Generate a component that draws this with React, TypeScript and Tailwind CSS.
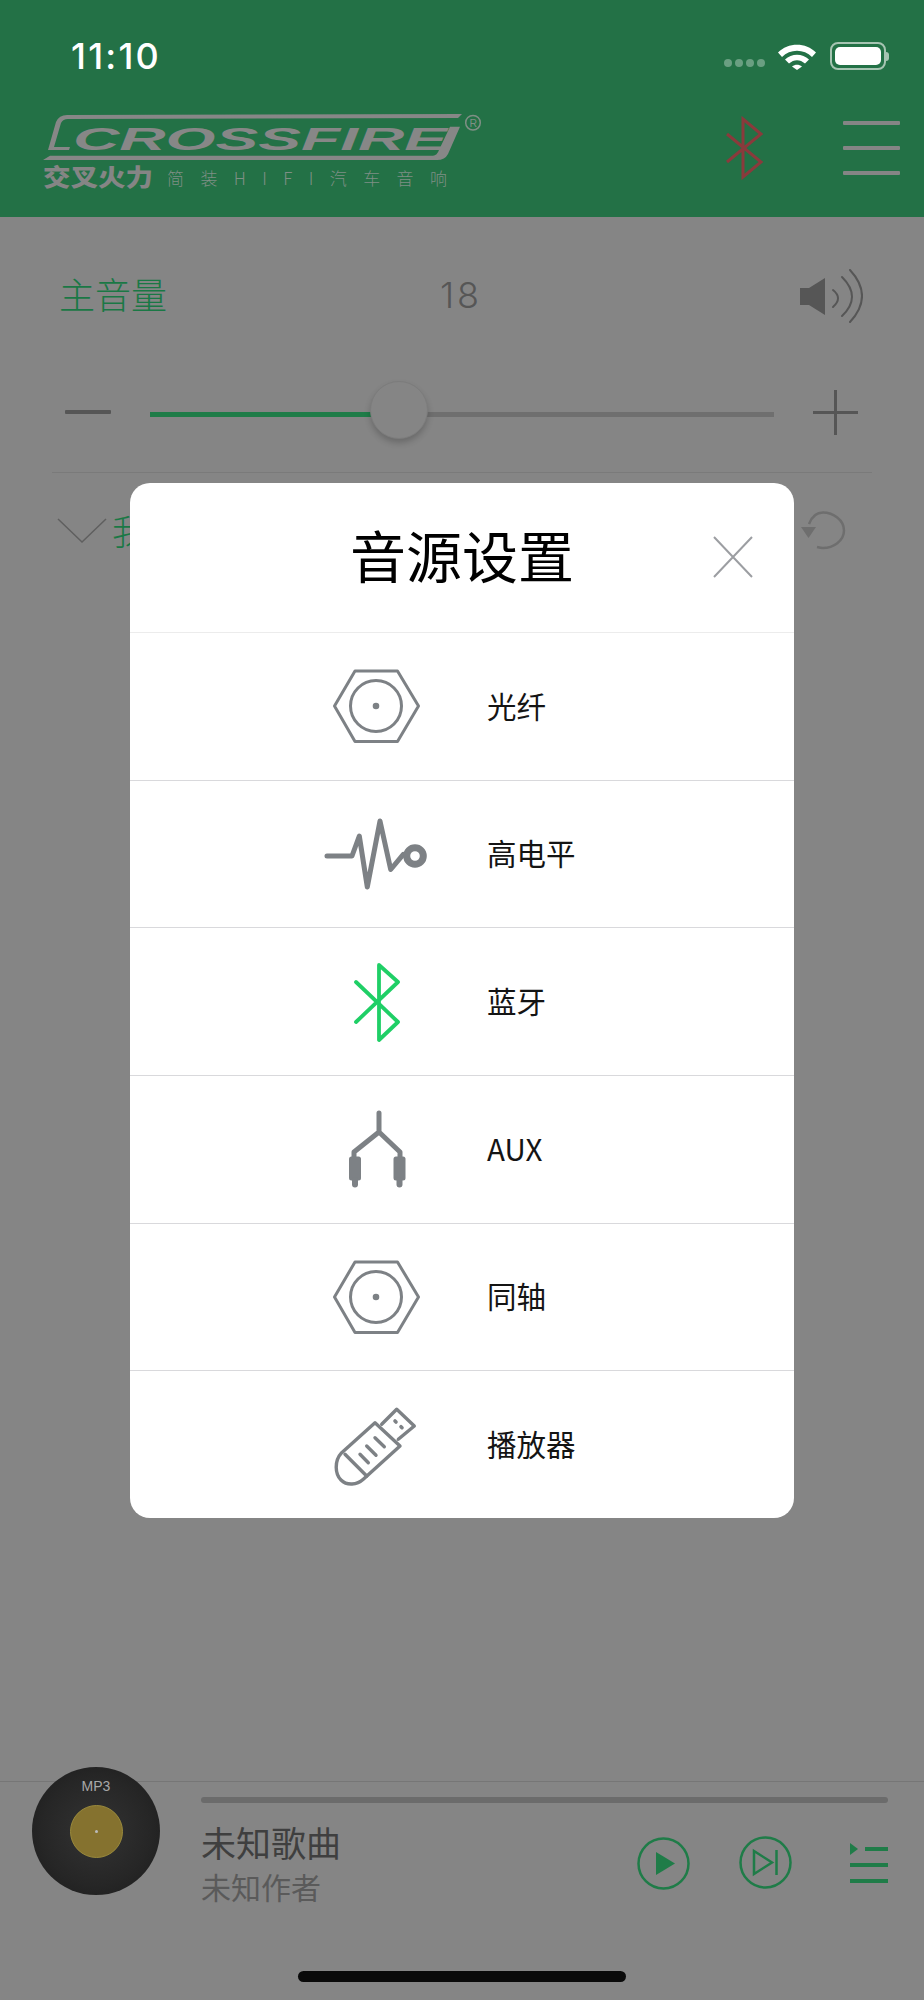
const SOURCES = [
  { label: "光纤", icon: "hex" },
  { label: "高电平", icon: "wave" },
  { label: "蓝牙", icon: "bluetooth" },
  { label: "AUX", icon: "aux" },
  { label: "同轴", icon: "hex" },
  { label: "播放器", icon: "usb" },
];

function SourceIcon({ name }: { name: string }) {
  const gray = "#7d8185";
  return (
    <svg width="110" height="100" viewBox="0 0 110 100" fill="none" strokeLinecap="round" strokeLinejoin="round" className="shrink-0">
      {name === "hex" && (
        <g stroke={gray} strokeWidth="3">
          <path d="M13.500 50 34 15H76.500L97.500 50 76.500 85.500H34Z" />
          <circle cx="55" cy="50" r="25.500" />
          <circle cx="55" cy="50" r="1.800" fill={gray} />
        </g>
      )}
      {name === "wave" && (
        <g stroke={gray}>
          <path d="M6 52H31L38.300 32 46.300 83 59 17 69.700 65.500 82.300 50.300" strokeWidth="5" />
          <circle cx="94" cy="52" r="8.300" strokeWidth="7" />
        </g>
      )}
      {name === "bluetooth" && (
        <path d="M35 30 77 70 58 88V13L77 30 35 70" stroke="#1fcf66" strokeWidth="3.800" />
      )}
      {name === "aux" && (
        <g>
          <path d="M58 14V33L33 53V59M58 33 79 53V59" stroke={gray} strokeWidth="5" />
          <rect x="28" y="57.500" width="12" height="24" rx="2.500" fill={gray} />
          <rect x="72.500" y="57.500" width="12" height="24" rx="2.500" fill={gray} />
          <path d="M34 81V85.500M78.500 81V85.500" stroke={gray} strokeWidth="6" />
        </g>
      )}
      {name === "usb" && (
        <g stroke={gray} strokeWidth="3.400">
          <path d="M54 27.700 79 51 42.300 84.300C36 90 26 91 20 85 14 79 13 66 20.700 57.700Z" />
          <path d="M24 59.300 45.700 81" />
          <path d="M60.700 29.300 75.700 14.300 93.300 31 77.300 44.300" />
          <path d="M74 26 75 27M80 31.700 81 32.700" strokeWidth="3.600" />
          <path d="M39 59.300 47.300 67.700M45.700 51 55 60.300M54 42.700 63.300 51.700" />
        </g>
      )}
    </svg>
  );
}

function Logo() {
  return (
    <svg width="440" height="78" viewBox="0 0 440 78" overflow="visible" className="block shrink-0">
      <path d="M419 2 24 3Q16 3 13 10L5 38H26L27 35H11L18 11Q20 7 25 7L415 6Z" fill="#878787" />
      <path d="M0 48 7 43.700H390Q394 43.700 396 38L407 14.700H417L405 42Q402 48 394 48Z" fill="#878787" />
      <text x="30" y="38" fontFamily="Liberation Sans, sans-serif" fontWeight="700" fontStyle="italic" fontSize="32" textLength="374" lengthAdjust="spacingAndGlyphs" fill="#878787">
        CROSSFIRE
      </text>
      <circle cx="430" cy="10.700" r="7.300" stroke="#7f8f85" strokeWidth="1.500" fill="none" />
      <text x="426.500" y="14.500" fontFamily="Liberation Sans, sans-serif" fontSize="10.500" fill="#7f8f85">
        R
      </text>
      <text x="0" y="74" fontFamily="Noto Sans CJK SC, sans-serif" fontWeight="900" fontSize="24" textLength="110" lengthAdjust="spacingAndGlyphs" fill="#858585">
        交叉火力
      </text>
      <text x="124" y="73" fontFamily="Noto Sans CJK SC, sans-serif" fontWeight="300" fontSize="17" textLength="280" lengthAdjust="spacing" fill="#7f8f85">
        简装HIFI汽车音响
      </text>
    </svg>
  );
}

function StatusBar() {
  return (
    <div className="h-[112px] flex items-center justify-between pl-[71px] pr-[35px] text-white">
      <span className="font-[Inter,sans-serif] text-[36px] font-medium tracking-[2.200px] leading-none">11:10</span>
      <div className="flex items-center">
        <div className="flex gap-[3px] mt-[13px] mr-[12px]">
          <span className="w-[8px] h-[8px] rounded-full bg-[#6a9f82]" />
          <span className="w-[8px] h-[8px] rounded-full bg-[#6a9f82]" />
          <span className="w-[8px] h-[8px] rounded-full bg-[#6a9f82]" />
          <span className="w-[8px] h-[8px] rounded-full bg-[#6a9f82]" />
        </div>
        <svg width="40" height="28" viewBox="0 0 40 28" className="mr-[13px]">
          <path d="M1 10.500C11 0 29 0 39 10.500L35 15C27 6.500 13 6.500 5 15Z" fill="#fff" />
          <path d="M8 17.500C14.500 11 25.500 11 32 17.500L28 21.500C23 17 17 17 12 21.500Z" fill="#fff" />
          <path d="M15 24.500C18 22 22 22 25 24.500L20 28Z" fill="#fff" />
        </svg>
        <div className="flex items-center">
          <div className="w-[56px] h-[28px] rounded-[8px] border-2 border-[#a6c4b2] p-[3px]">
            <div className="w-full h-full rounded-[5px] bg-white" />
          </div>
          <div className="w-[3px] h-[9px] rounded-r-full bg-[#a6c4b2]" />
        </div>
      </div>
    </div>
  );
}

function Header() {
  return (
    <header className="h-[217px] bg-[#237146]">
      <StatusBar />
      <div className="flex pl-[43px]">
        <Logo />
        <svg width="40" height="64" viewBox="0 0 40 64" fill="none" className="ml-[241px] mt-[4px] shrink-0">
          <path d="M3 18 37 46 19 61V3L37 18 3 46" stroke="#8a3a3c" strokeWidth="3" />
        </svg>
        <div className="ml-[79px] mt-[9px] w-[57px] h-[54px] shrink-0 flex flex-col justify-between">
          <span className="h-[4px] bg-[#858585] rounded-[1px]" />
          <span className="h-[4px] bg-[#858585] rounded-[1px]" />
          <span className="h-[4px] bg-[#858585] rounded-[1px]" />
        </div>
      </div>
    </header>
  );
}

function VolumePanel() {
  return (
    <div className="pt-[52px]">
      <div className="grid grid-cols-[1fr_auto_1fr] items-center h-[54px] pl-[59px] pr-[61px]">
        <span className="text-[36px] leading-none font-light text-[#1a7845] pb-[6px]">主音量</span>
        <span className="font-[Inter,sans-serif] text-[36px] leading-none font-light tracking-[3px] text-[#565656] pb-[2px]">18</span>
        <svg width="64" height="54" viewBox="0 0 64 54" fill="none" className="justify-self-end">
          <path d="M1 19H10L26 9V46L10 36H1Z" fill="#565656" />
          <path d="M34 21Q44 29 34 38" stroke="#565656" strokeWidth="2" strokeLinecap="round" />
          <path d="M43 8Q63 28 43 47" stroke="#565656" strokeWidth="2" strokeLinecap="round" />
          <path d="M51 1Q75 27 51 53" stroke="#565656" strokeWidth="2" strokeLinecap="round" />
        </svg>
      </div>

      <div className="flex items-center h-[58px] mt-[60px] pl-[65px] pr-[66px]">
        <span className="w-[46px] h-[4px] bg-[#565656] rounded-[1px]" />
        <div className="relative flex-1 h-[5px] mx-[39px] mt-[5px] bg-[#6f6f6f]">
          <div className="h-full w-[221px] bg-[#1f7c48]" />
          <div className="absolute left-[220px] top-[-31px] w-[58px] h-[58px] rounded-full bg-[#858585] border border-[#7c7c7c] shadow-[0_4px_6px_rgba(0,0,0,0.2)]" />
        </div>
        <svg width="45" height="45" viewBox="0 0 45 45" fill="none">
          <path d="M0 22.500H45M22.500 0V45" stroke="#565656" strokeWidth="3" />
        </svg>
      </div>

      <div className="h-px mt-[31px] mx-[52px] bg-[#7a7a7a]" />

      <div className="flex items-center justify-between h-[60px] mt-[28px] pl-[57px] pr-[78px]">
        <div className="flex items-center">
          <svg width="50" height="26" viewBox="0 0 50 26" fill="none">
            <path d="M1 1 25 24 49 1" stroke="#5f5f5f" strokeWidth="1.500" />
          </svg>
          <span className="ml-[5px] text-[35px] leading-none font-light text-[#1a7845] pb-[4px]">我</span>
        </div>
        <svg width="46" height="40" viewBox="0 0 46 40" fill="none">
          <path d="M9 13C12 5 17 1.500 23 1.500 33 1.500 44 9 44 19.500S33 37 23 37C21 37 19 36.500 17 36" stroke="#6e6e6e" strokeWidth="2.500" />
          <path d="M1 16H16L8.500 27Z" fill="#6e6e6e" />
        </svg>
      </div>
    </div>
  );
}

function Player() {
  return (
    <div className="border-t border-[#767676] h-[219px] pl-[32px] pr-[36px] flex">
      <div className="relative w-[128px] h-[128px] -mt-[15px] shrink-0 rounded-full bg-[radial-gradient(circle,#333_0%,#262626_60%,#1a1a1a_100%)] flex items-center justify-center">
        <span className="absolute top-[12px] font-[Liberation_Sans,sans-serif] text-[14px] leading-none text-[#a8a8a8]">MP3</span>
        <div className="w-[53px] h-[53px] rounded-full bg-[#85722f] border border-[#9a8a3c] flex items-center justify-center">
          <span className="w-[3px] h-[3px] rounded-full bg-[#bbb]" />
        </div>
      </div>
      <div className="flex-1 ml-[41px] pt-[15px]">
        <div className="h-[6px] rounded-full bg-[#6b6b6b]" />
        <div className="flex mt-[16px]">
          <div className="flex-1">
            <div className="text-[35px] leading-[46px] text-[#3f3f3f]">未知歌曲</div>
            <div className="text-[30px] leading-[42px] text-[#5a5a5a]">未知作者</div>
          </div>
          <svg width="53" height="53" viewBox="0 0 53 53" fill="none" className="mt-[18px] -ml-[1px]">
            <circle cx="26.500" cy="26.500" r="25" stroke="#1f7c48" strokeWidth="2.500" />
            <path d="M19 15 38 26.500 19 38Z" fill="#1f7c48" />
          </svg>
          <svg width="53" height="53" viewBox="0 0 53 53" fill="none" className="mt-[17px] ml-[49px]">
            <circle cx="26.500" cy="26.500" r="25" stroke="#1f7c48" strokeWidth="2.500" />
            <path d="M15 15 33 26.500 15 38Z" stroke="#1f7c48" strokeWidth="2.500" />
            <path d="M37.500 14V39" stroke="#1f7c48" strokeWidth="2.500" />
          </svg>
          <div className="relative w-[38px] h-[40px] ml-[58px] mt-[24px] flex flex-col justify-between items-end">
            <svg width="8" height="12" viewBox="0 0 8 12" className="absolute left-0 top-0">
              <path d="M0 0 8 6 0 12Z" fill="#1f7c48" />
            </svg>
            <span className="w-[23px] h-[4px] mt-[4px] bg-[#1f7c48]" />
            <span className="w-full h-[4px] bg-[#1f7c48]" />
            <span className="w-full h-[4px] bg-[#1f7c48]" />
          </div>
        </div>
      </div>
    </div>
  );
}

function SourceModal() {
  return (
    <div className="absolute left-[130px] top-[483px] w-[664px] h-[1035px] rounded-[20px] bg-white overflow-hidden flex flex-col">
      <div className="relative h-[150px] shrink-0 flex items-center justify-center border-b border-[#ececec]">
        <span className="text-[56px] leading-none text-black pb-[8px]">音源设置</span>
        <svg width="40" height="42" viewBox="0 0 40 42" fill="none" className="absolute left-[583px] top-[53px]">
          <path d="M1 1 39 41M39 1 1 41" stroke="#9c9ea2" strokeWidth="2" />
        </svg>
      </div>
      {SOURCES.map((s, i) => (
        <div
          key={i}
          className="flex-1 flex items-center pl-[191px] border-b border-[#d9d9dc] last:border-b-0"
        >
          <SourceIcon name={s.icon} />
          <span className="ml-[56px] pb-[2px] text-[29.500px] leading-none text-[#141414]">{s.label}</span>
        </div>
      ))}
    </div>
  );
}

export default function App() {
  return (
    <div className="relative w-[924px] h-[2000px] overflow-hidden bg-[#858585] font-[Noto_Sans_CJK_SC,sans-serif] flex flex-col">
      <Header />
      <main className="flex-1">
        <VolumePanel />
      </main>
      <Player />
      <SourceModal />
      <div className="absolute bottom-[18px] left-[298px] w-[328px] h-[11px] rounded-full bg-[#0a0a0a]" />
    </div>
  );
}
